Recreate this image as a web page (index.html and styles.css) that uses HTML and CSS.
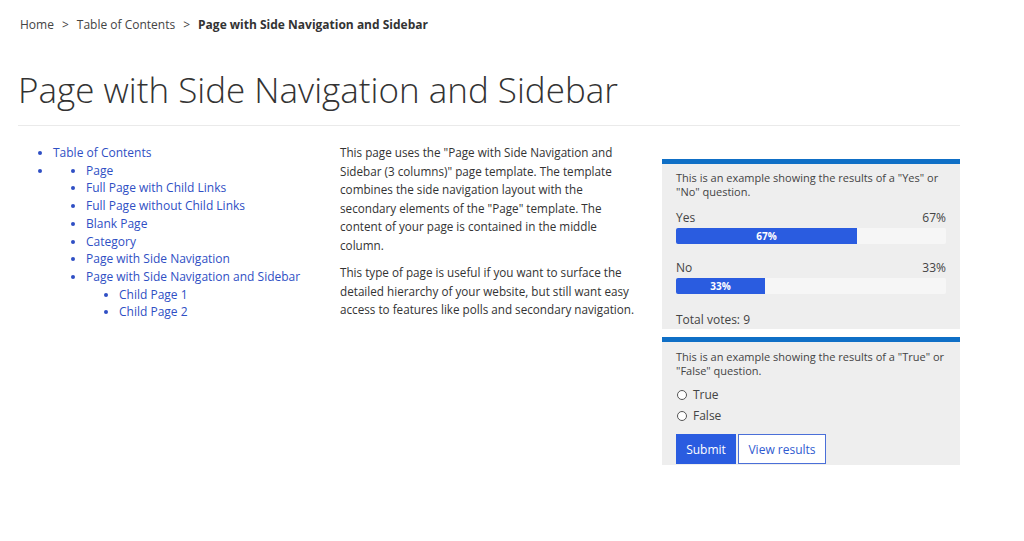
FILE: index.html
```html
<!DOCTYPE html>
<html lang="en">
<head>
<meta charset="utf-8">
<title>Page with Side Navigation and Sidebar</title>
<link rel="stylesheet" href="styles.css">
</head>
<body>
<div class="page">
  <nav class="breadcrumb">
    <a href="#">Home</a><span class="sep">&gt;</span><a href="#">Table of Contents</a><span class="sep">&gt;</span><strong>Page with Side Navigation and Sidebar</strong>
  </nav>
  <h1 class="title">Page with Side Navigation and Sidebar</h1>
  <div class="columns">
    <ul class="sidenav">
      <li><a href="#">Table of Contents</a></li>
      <li>
        <ul>
          <li><a href="#">Page</a></li>
          <li><a href="#">Full Page with Child Links</a></li>
          <li><a href="#">Full Page without Child Links</a></li>
          <li><a href="#">Blank Page</a></li>
          <li><a href="#">Category</a></li>
          <li><a href="#">Page with Side Navigation</a></li>
          <li><a href="#">Page with Side Navigation and Sidebar</a>
            <ul>
              <li><a href="#">Child Page 1</a></li>
              <li><a href="#">Child Page 2</a></li>
            </ul>
          </li>
        </ul>
      </li>
    </ul>
    <div class="content">
      <p>This page uses the "Page with Side Navigation and Sidebar (3 columns)" page template. The template combines the side navigation layout with the secondary elements of the "Page" template. The content of your page is contained in the middle column.</p>
      <p>This type of page is useful if you want to surface the detailed hierarchy of your website, but still want easy access to features like polls and secondary navigation.</p>
    </div>
    <aside class="sidebar">
      <section class="poll poll-results">
        <p class="question">This is an example showing the results of a "Yes" or "No" question.</p>
        <div class="result">
          <div class="result-head"><span>Yes</span><span>67%</span></div>
          <div class="track"><div class="fill" style="width:67%">67%</div></div>
        </div>
        <div class="result">
          <div class="result-head"><span>No</span><span>33%</span></div>
          <div class="track"><div class="fill" style="width:33%">33%</div></div>
        </div>
        <p class="total">Total votes: 9</p>
      </section>
      <section class="poll poll-form">
        <p class="question">This is an example showing the results of a "True" or "False" question.</p>
        <label class="option"><span class="radio"></span>True</label>
        <label class="option"><span class="radio"></span>False</label>
        <div class="buttons">
          <button class="btn btn-primary">Submit</button>
          <button class="btn btn-outline">View results</button>
        </div>
      </section>
    </aside>
  </div>
</div>
</body>
</html>
```
FILE: styles.css
```css
* { box-sizing: border-box; }
html, body { margin: 0; padding: 0; background: #fff; }
body {
  font-family: "Open Sans", "Noto Sans", "DejaVu Sans", sans-serif;
  color: #333;
  font-size: 12px;
}
a { text-decoration: none; }
.page {
  width: 960px;
  padding-left: 18px;
}
.breadcrumb {
  padding-top: 16px;
  padding-left: 2px;
  font-size: 12px;
  line-height: 18px;
  color: #444;
}
.breadcrumb a { color: #444; }
.breadcrumb .sep { margin: 0 8px; color: #444; }
.breadcrumb strong { font-weight: 700; color: #333; }
.title {
  margin: 30px 0 0 0;
  font-size: 35px;
  line-height: 52px;
  font-weight: 300;
  color: #333;
  padding-bottom: 9px;
  border-bottom: 1px solid #eaeaea;
}
.columns {
  display: grid;
  grid-template-columns: 302px 302px 298px;
  column-gap: 20px;
  padding-top: 18px;
}
.sidenav, .sidenav ul {
  margin: 0;
  padding-left: 35px;
  list-style: disc;
  color: #2f4fc4;
}
.sidenav ul { padding-left: 33px; }
.sidenav li {
  font-size: 12px;
  line-height: 17.7px;
}
.sidenav a { color: #2f4fc4; }
.content { margin-top: -1px; }
.content p {
  max-width: 298px;
  margin: 0 0 9px 0;
  font-size: 11.7px;
  line-height: 18.5px;
  color: #333;
}
.sidebar {
  padding-top: 15px;
  display: flex;
  flex-direction: column;
  gap: 8px;
}
.poll {
  background: #eeeeee;
  border-top: 5px solid #0f6fc6;
  padding: 7px 14px 1px 14px;
  font-size: 11px;
  color: #444;
}
.question {
  margin: 0;
  line-height: 13.5px;
}
.result { margin-top: 12px; }
.result + .result { margin-top: 16px; }
.result-head {
  display: flex;
  justify-content: space-between;
  line-height: 16px;
  font-size: 12px;
}
.track {
  margin-top: 2px;
  height: 16px;
  background: #f6f6f6;
  border-radius: 2px;
}
.fill {
  height: 16px;
  background: #2a5ce0;
  color: #fff;
  font-size: 10px;
  font-weight: 700;
  line-height: 16px;
  text-align: center;
  border-radius: 2px 0 0 2px;
}
.total {
  margin: 18px 0 0 0;
  line-height: 16px;
  font-size: 12px;
}
.poll-form { padding: 8px 14px 0 14px; }
.poll-form .question { line-height: 14px; }
.option {
  display: flex;
  align-items: center;
  gap: 6px;
  font-size: 12px;
  line-height: 21px;
}
.question + .option { margin-top: 6px; }
.radio {
  width: 10px;
  height: 10px;
  border: 1px solid #555;
  border-radius: 50%;
  background: #fff;
  margin-left: 1px;
}
.buttons {
  display: flex;
  gap: 2px;
  margin-top: 8px;
  padding-bottom: 1px;
}
.btn {
  height: 30px;
  font-family: inherit;
  font-size: 12px;
  padding: 0;
  border-radius: 0;
  white-space: nowrap;
  cursor: pointer;
}
.btn-primary {
  background: #2a5ce0;
  border: 1px solid #2a5ce0;
  color: #fff;
  width: 60px;
}
.btn-outline {
  background: #fff;
  border: 1px solid #4a6fd8;
  color: #2f5bd0;
  width: 88px;
}
```
